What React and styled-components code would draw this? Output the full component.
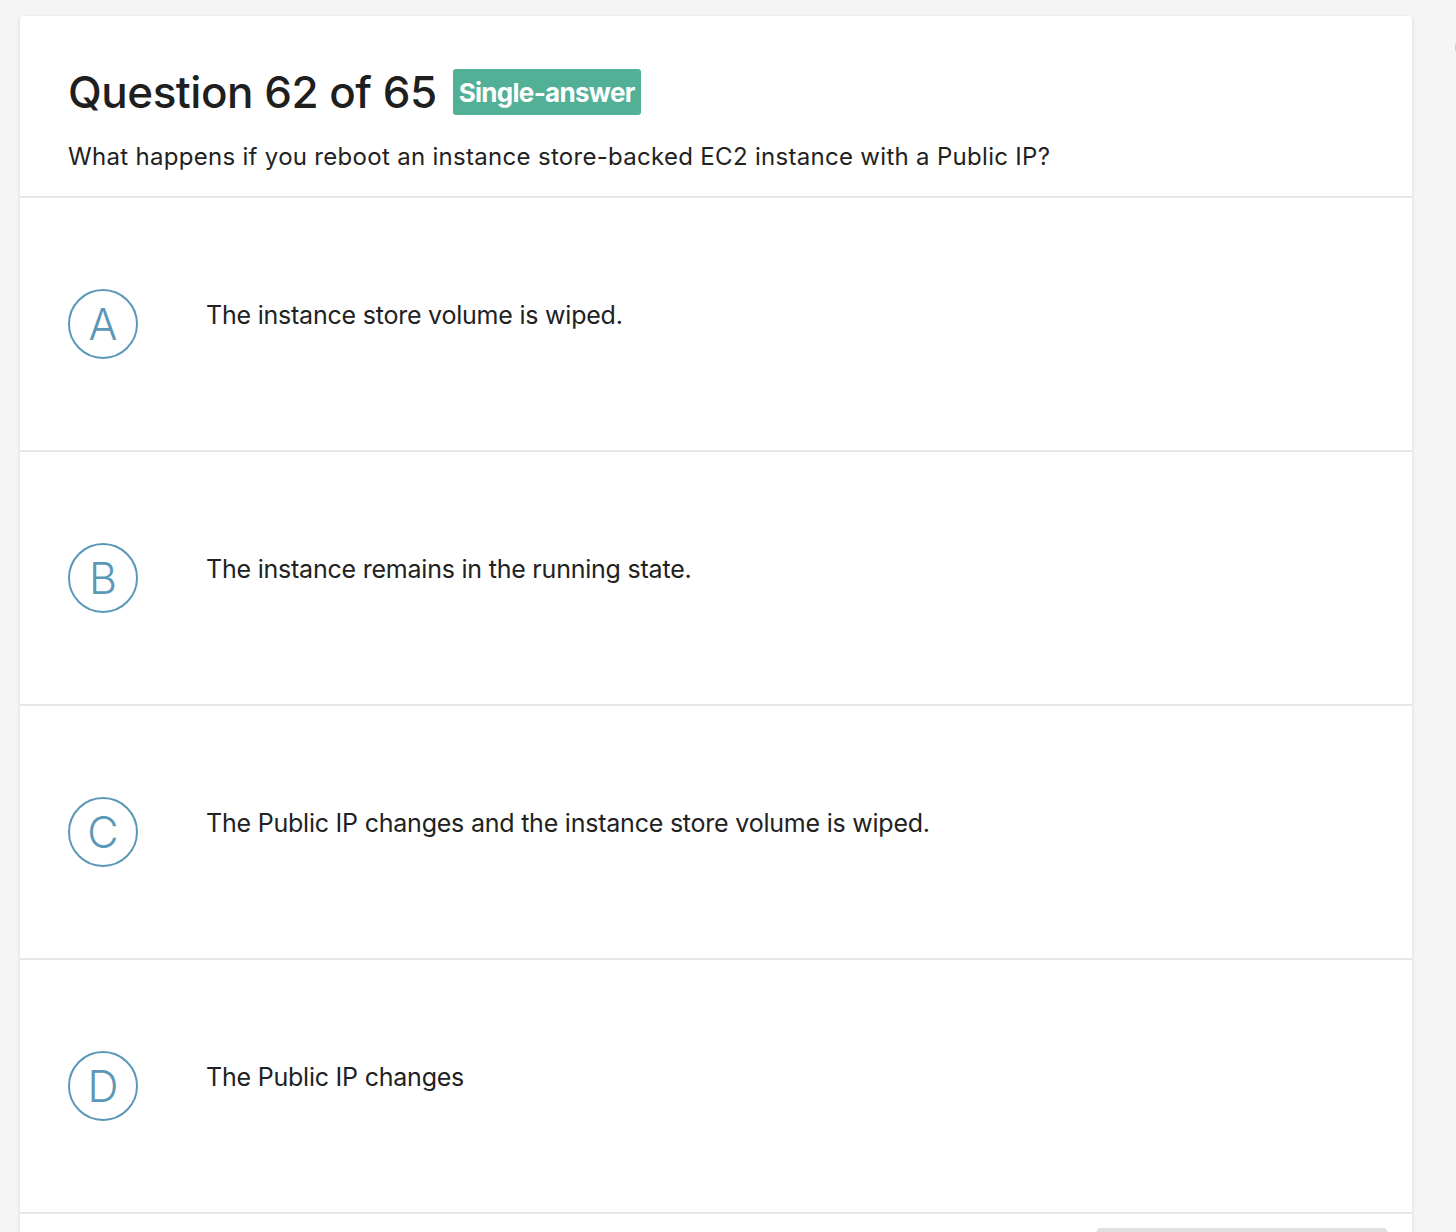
import React from "react";
import styled, { createGlobalStyle } from "styled-components";

const Global = createGlobalStyle`
  html, body { margin: 0; padding: 0; background: #f5f5f5; }
  body { font-family: Inter, "Noto Sans", sans-serif; color: #222; overflow: hidden; }
`;

const Page = styled.div`
  padding: 16px 44px 0 20px;
  height: 1232px;
  box-sizing: border-box;
  position: relative;
`;

const Card = styled.div`
  background: #fff;
  border-radius: 4px;
  box-shadow: 0 1px 4px rgba(0,0,0,0.12);
  width: 1392px;
  height: 1240px;
`;

const Header = styled.div`
  padding: 50px 48px 22px;
  border-bottom: 2px solid #e8e8e8;
`;

const TitleRow = styled.div`
  display: flex;
  align-items: center;
  gap: 16px;
`;

const Title = styled.h1`
  margin: 0;
  font-size: 44px;
  font-weight: 500;
  letter-spacing: -0.5px;
  color: #1f1f1f;
  line-height: 52px;
`;

const Badge = styled.span`
  background: #52b097;
  color: #fff;
  font-size: 26px;
  font-weight: 700;
  letter-spacing: -0.7px;
  border-radius: 3px;
  height: 46px;
  padding: 0 6px;
  display: flex;
  align-items: center;
`;

const Prompt = styled.p`
  margin: 22px 0 0;
  font-size: 24px;
  letter-spacing: 0.3px;
  line-height: 34px;
  color: #222;
`;

const Option = styled.div`
  display: flex;
  align-items: center;
  height: 254px;
  box-sizing: border-box;
  padding-left: 48px;
  border-bottom: 2px solid #e8e8e8;
`;

const Circle = styled.div`
  width: 70px;
  height: 70px;
  box-sizing: border-box;
  border: 2px solid #5b98b8;
  border-radius: 50%;
  color: #5b98b8;
  font-size: 43px;
  font-weight: 300;
  display: flex;
  align-items: center;
  justify-content: center;
  flex-shrink: 0;
`;

const OptionText = styled.div`
  margin-left: 68px;
  margin-bottom: 18px;
  font-size: 25px;
  letter-spacing: -0.22px;
  color: #222;
`;

const Footer = styled.div`
  display: flex;
  justify-content: flex-end;
  padding: 14px 24px 0 0;
`;

const GhostButton = styled.div`
  width: 292px;
  height: 48px;
  background: #e0e0e0;
  border-radius: 5px;
`;

const EdgeMark = styled.span`
  position: absolute;
  right: -6px;
  top: 32px;
  font-size: 24px;
  color: #333;
`;

const options = [
  ["A", "The instance store volume is wiped."],
  ["B", "The instance remains in the running state."],
  ["C", "The Public IP changes and the instance store volume is wiped."],
  ["D", "The Public IP changes"],
];

export default function App() {
  return (
    <>
      <Global />
      <Page>
        <Card>
          <Header>
            <TitleRow>
              <Title>Question 62 of 65</Title>
              <Badge>Single-answer</Badge>
            </TitleRow>
            <Prompt>What happens if you reboot an instance store-backed EC2 instance with a Public IP?</Prompt>
          </Header>
          {options.map(([l, t]) => (
            <Option key={l}>
              <Circle>{l}</Circle>
              <OptionText>{t}</OptionText>
            </Option>
          ))}
          <Footer>
            <GhostButton />
          </Footer>
        </Card>
        <EdgeMark>(</EdgeMark>
      </Page>
    </>
  );
}
